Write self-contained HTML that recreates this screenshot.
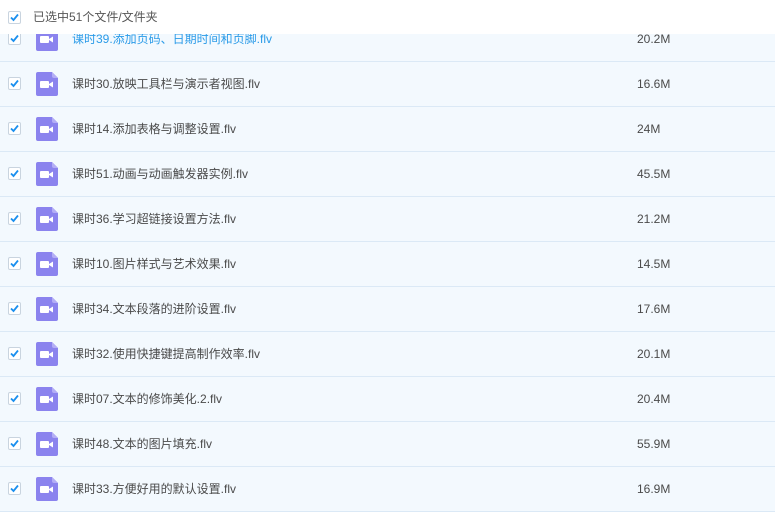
<!DOCTYPE html>
<html><head><meta charset="utf-8"><style>
body{margin:0;width:775px;height:508px;overflow:hidden;background:#f3f9fe;font-family:"Liberation Sans","Noto Sans CJK SC",sans-serif;position:relative}
.hdr{position:absolute;left:0;top:0;width:775px;height:34px;background:#fff;z-index:2}
.cb{position:absolute;width:11px;height:11px;border:1px solid #c9d4df;border-radius:2px;background:#fff}
.cb svg{position:absolute;left:1px;top:1px}
.row{position:absolute;left:0;width:775px;height:44px;border-bottom:1px solid #dbe9f6}
.row .cb{left:8px;top:15px}
.ic{position:absolute;left:36px;top:10px}
.nm{position:absolute;left:72px;top:14px;font-size:12px;color:#4a4a4a;line-height:16px}
.sz{position:absolute;left:637px;top:14px;font-size:12px;color:#4a4a4a;line-height:16px}
</style></head><body>
<div class="hdr">
<div class="cb" style="left:8px;top:11px"><svg width="9" height="9" viewBox="0 0 9 9"><path d="M1 4.5L3.5 7L8 1.5" stroke="#1a8fef" stroke-width="1.8" fill="none"/></svg></div>
<div style="position:absolute;left:33px;top:9px;font-size:12px;color:#555;line-height:16px">已选中51个文件/文件夹</div>
</div>
<div id="rows"></div>
<script>
var d=[["课时39.添加页码、日期时间和页脚.flv","20.2M"],["课时30.放映工具栏与演示者视图.flv","16.6M"],["课时14.添加表格与调整设置.flv","24M"],["课时51.动画与动画触发器实例.flv","45.5M"],["课时36.学习超链接设置方法.flv","21.2M"],["课时10.图片样式与艺术效果.flv","14.5M"],["课时34.文本段落的进阶设置.flv","17.6M"],["课时32.使用快捷键提高制作效率.flv","20.1M"],["课时07.文本的修饰美化.2.flv","20.4M"],["课时48.文本的图片填充.flv","55.9M"],["课时33.方便好用的默认设置.flv","16.9M"]];
var h="";
d.forEach(function(r,k){var c=k==0?' style="color:#2a9be8"':'';
h+='<div class="row" style="top:'+(17+45*k)+'px"><div class="cb"><svg width="9" height="9" viewBox="0 0 9 9"><path d="M1 4.5L3.5 7L8 1.5" stroke="#1a8fef" stroke-width="1.8" fill="none"/></svg></div>'+
'<svg class="ic" width="22" height="24" viewBox="0 0 22 24"><path d="M2 0H16L22 6V22a2 2 0 0 1-2 2H2a2 2 0 0 1-2-2V2a2 2 0 0 1 2-2z" fill="#8b83ee"/><path d="M16 0L22 6H18a2 2 0 0 1-2-2z" fill="#b4aef6"/><rect x="4" y="9" width="9" height="7" rx="1" fill="#fff"/><path d="M13 12L17 9.5V15.5L13 13z" fill="#fff"/></svg>'+
'<div class="nm"'+c+'>'+r[0]+'</div><div class="sz">'+r[1]+'</div></div>';});
document.getElementById("rows").innerHTML=h;
</script>
</body></html>
